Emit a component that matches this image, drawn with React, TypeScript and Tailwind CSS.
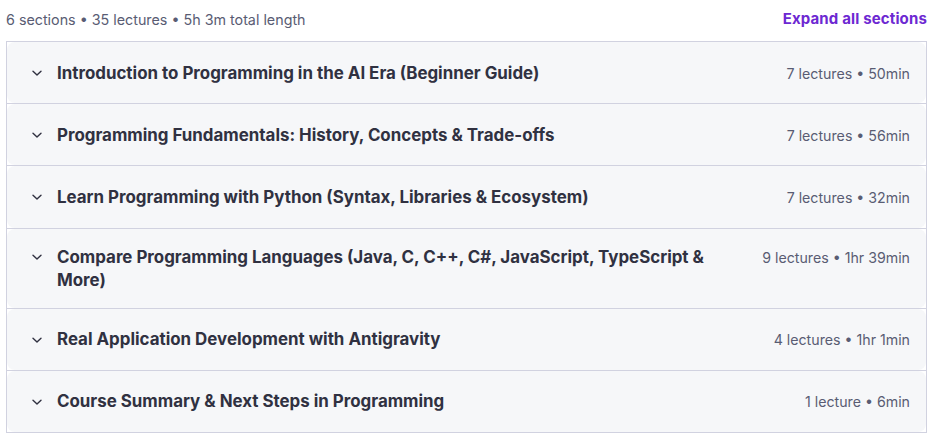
import React from "react";

const sections = [
  { title: "Introduction to Programming in the AI Era (Beginner Guide)", meta: "7 lectures • 50min" },
  { title: "Programming Fundamentals: History, Concepts & Trade-offs", meta: "7 lectures • 56min" },
  { title: "Learn Programming with Python (Syntax, Libraries & Ecosystem)", meta: "7 lectures • 32min" },
  { title: "Compare Programming Languages (Java, C, C++, C#, JavaScript, TypeScript & More)", meta: "9 lectures • 1hr 39min" },
  { title: "Real Application Development with Antigravity", meta: "4 lectures • 1hr 1min" },
  { title: "Course Summary & Next Steps in Programming", meta: "1 lecture • 6min" },
];

function Chevron() {
  return (
    <svg width="12" height="12" viewBox="0 0 12 12" fill="none" className="shrink-0">
      <path d="M2 4.2 L6 8 L10 4.2" stroke="#303141" strokeWidth="1.4" strokeLinecap="round" strokeLinejoin="round" />
    </svg>
  );
}

export default function App() {
  return (
    <div className="bg-white w-[934px] h-[440px] pl-[6px] pr-[7px]" style={{ fontFamily: "Inter, 'Noto Sans', sans-serif" }}>
      <div className="flex items-center justify-between h-[38px] pt-[1px]">
        <span className="text-[14.3px] text-[#595c73]">6 sections • 35 lectures • 5h 3m total length</span>
        <button className="text-[15px] font-bold tracking-[0.15px] text-[#6d28d2]">Expand all sections</button>
      </div>
      <div className="mt-[3px] border border-[#d1d2e0]">
        {sections.map((s, i) => (
          <div key={i} className={i < sections.length - 1 ? "border-b border-[#d1d2e0]" : ""}>
            <div className="flex flex-col justify-center min-h-[61.2px] bg-[#f6f7f9] rounded-[8px] pl-[24px] pr-[16px] pt-[17px] pb-[16px]">
              <div className="flex items-start">
                <div className="h-[23px] flex items-center mr-[14px]"><Chevron /></div>
                <div className="flex-1 text-[16.9px] leading-[23px] font-bold text-[#303141] pr-[50px]">{s.title}</div>
                <div className="text-[14.2px] leading-[23px] text-[#595c73] whitespace-nowrap">{s.meta}</div>
              </div>
            </div>
          </div>
        ))}
      </div>
    </div>
  );
}
